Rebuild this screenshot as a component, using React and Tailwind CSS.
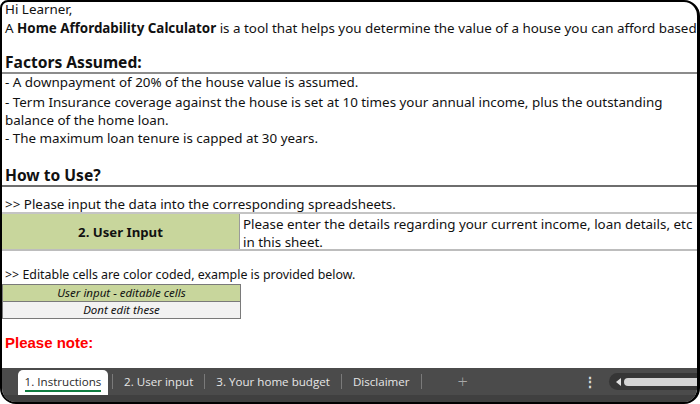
import React from 'react';

const body = { fontFamily: '"Noto Sans", "Open Sans", sans-serif' };
const ui = { fontFamily: '"Open Sans", "Noto Sans", sans-serif' };

function Row({ h, className = '', children }) {
  return (
    <div className={`flex items-end px-[3px] whitespace-nowrap ${className}`} style={{ height: h }}>
      {children}
    </div>
  );
}

function Tab({ label, sep = true }) {
  return (
    <div className="flex items-center h-full">
      <span className="px-[11px] text-[11.6px] text-[#e6e6e6]">{label}</span>
      {sep && <span className="w-px h-[15px] bg-[#7a7a7a]" />}
    </div>
  );
}

export default function App() {
  return (
    <div className="w-[700px] h-[404px] bg-white">
      <div className="w-full h-full border-2 border-r-[3px] border-black rounded-tl-[8px] rounded-tr-[16px] rounded-b-[16px] overflow-hidden flex flex-col bg-white">
        <div className="flex-1 text-[13.4px] text-[#111] leading-[18px] flex flex-col" style={body}>
          <Row h={16}>Hi Learner,</Row>
          <Row h={19}>
            <span>
              A <b>Home Affordability Calculator</b> is a tool that helps you determine the value of a house you can afford based
            </span>
          </Row>
          <Row h={13} />
          <Row h={24} className="border-b-2 border-[#8c8c8c]">
            <span className="text-[15.6px] font-bold leading-[20px]">Factors Assumed:</span>
          </Row>
          <Row h={17}>- A downpayment of 20% of the house value is assumed.</Row>
          <div className="px-[3px] pt-[2px] h-[38px] whitespace-nowrap">
            - Term Insurance coverage against the house is set at 10 times your annual income, plus the outstanding
            <br />balance of the home loan.
          </div>
          <Row h={18}>- The maximum loan tenure is capped at 30 years.</Row>
          <Row h={13} />
          <Row h={27} className="border-b-2 border-[#6e6e6e]">
            <span className="text-[15.6px] font-bold leading-[20px]">How to Use?</span>
          </Row>
          <Row h={27} className="border-b-2 border-[#c4c4c4]">
            <span className="leading-[15px]">&gt;&gt; Please input the data into the corresponding spreadsheets.</span>
          </Row>
          <div className="flex h-[37px] border-b-2 border-[#bdbdbd]">
            <div className="w-[238px] bg-[#c8d69c] border-r border-[#9a9a9a] flex items-center justify-center font-bold text-[13.2px]">
              2. User Input
            </div>
            <div className="flex-1 px-[3px] pt-[1px] leading-[18px] whitespace-nowrap">
              Please enter the details regarding your current income, loan details, etc
              <br />in this sheet.
            </div>
          </div>
          <Row h={33}>
            <span className="text-[12.4px]">&gt;&gt; Editable cells are color coded, example is provided below.</span>
          </Row>
          <div className="w-[239px] border border-[#7a7a7a] text-[11.5px] italic text-center leading-[16px]">
            <div className="bg-[#c8d69c] border-b border-[#7a7a7a] h-[17px]">User input - editable cells</div>
            <div className="bg-[#f2f2f2] h-[16px]">Dont edit these</div>
          </div>
          <Row h={33}>
            <span className="text-[15px] font-bold text-[#ff0000]" style={{ fontFamily: '"Liberation Sans", Arial, sans-serif' }}>
              Please note:
            </span>
          </Row>
        </div>

        <div className="h-[34px] bg-[#4b4b4b] flex flex-col shrink-0" style={ui}>
          <div className="h-[27px] flex items-stretch">
            <div className="w-[16px]" />
            <div className="h-full pt-[2px]">
              <div className="h-full w-[90px] bg-white rounded-t-[5px] flex flex-col items-center justify-center">
                <span className="text-[11.6px] text-[#2b2b2b] leading-[15px]">1. Instructions</span>
                <span className="h-[2px] w-[76px] bg-[#107c41] mt-[1px]" />
              </div>
            </div>
            <div className="w-[4px]" />
            <span className="self-center w-px h-[15px] bg-[#7a7a7a]" />
            <Tab label="2. User input" />
            <Tab label="3. Your home budget" />
            <Tab label="Disclaimer" />
            <div className="flex items-center pl-[36px] text-[18px] text-[#a8a8a8] font-light">+</div>
            <div className="flex-1" />
            <div className="flex items-center pr-[12px] text-[14px] font-bold text-[#dcdcdc]">⋮</div>
            <div className="flex items-center">
              <div className="h-[17px] w-[88px] bg-[#363636] rounded-l-full flex items-center pl-[7px] gap-[3px]">
                <span className="w-0 h-0 border-y-[4px] border-y-transparent border-r-[5px] border-r-[#e0e0e0]" />
                <span className="flex-1 h-[8px] bg-[#d4d4d4] rounded-l-full" />
              </div>
            </div>
          </div>
          <div className="flex-1 bg-[#404040]" />
        </div>
      </div>
    </div>
  );
}
